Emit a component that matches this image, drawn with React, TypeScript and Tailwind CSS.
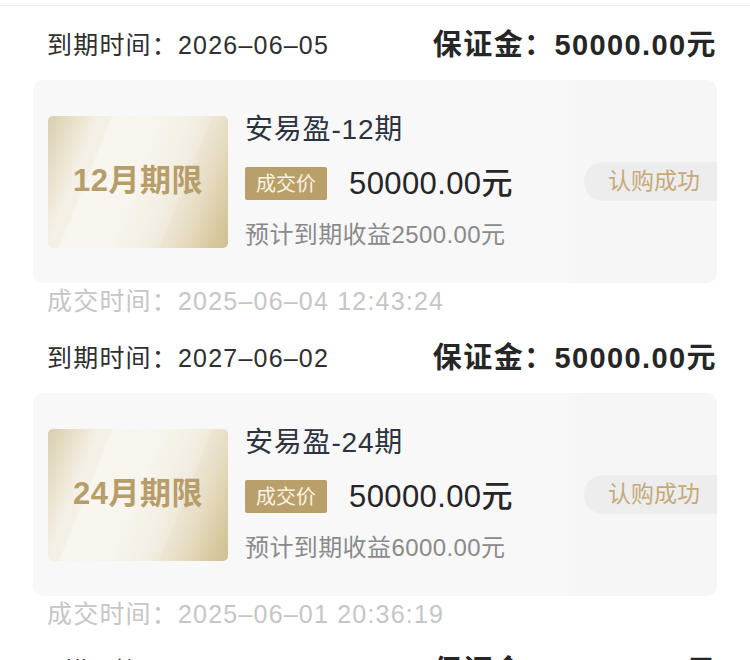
import type { ReactNode } from "react";

type Order = {
  expire: string;
  deposit: string;
  months: number;
  name: string;
  price: string;
  income: string;
  dealTime: string;
};

const orders: Order[] = [
  {
    expire: "2026–06–05",
    deposit: "50000.00元",
    months: 12,
    name: "安易盈-12期",
    price: "50000.00元",
    income: "预计到期收益2500.00元",
    dealTime: "2025–06–04 12:43:24",
  },
  {
    expire: "2027–06–02",
    deposit: "50000.00元",
    months: 24,
    name: "安易盈-24期",
    price: "50000.00元",
    income: "预计到期收益6000.00元",
    dealTime: "2025–06–01 20:36:19",
  },
  {
    expire: "2027–06–01",
    deposit: "50000.00元",
    months: 24,
    name: "安易盈-24期",
    price: "50000.00元",
    income: "预计到期收益6000.00元",
    dealTime: "2025–05–30 10:12:08",
  },
];

function TermCover({ children }: { children: ReactNode }) {
  return (
    <div className="relative flex h-[132px] w-[180px] shrink-0 items-center justify-center overflow-hidden rounded-[5px] bg-[linear-gradient(112deg,#d8cdae_0%,#ebe4d0_14%,#f4f0e5_22%,#f6f2e8_48%,#f0eadc_66%,#e6dcc2_80%,#d8c9a0_92%,#cfbe90_100%)]">
      {/* light sheen band */}
      <div className="absolute inset-0 bg-[linear-gradient(112deg,transparent_0%,transparent_27%,rgba(255,255,255,0.35)_28%,rgba(255,255,255,0.15)_70%,transparent_71%)]" />
      <span className="relative text-[31px] font-bold tracking-[0.5px] text-[#b69d69]">
        {children}
      </span>
    </div>
  );
}

function OrderItem({ order }: { order: Order }) {
  return (
    <section className="pb-[14px]">
      <div className="flex h-[48px] items-center justify-between pl-[47px] pr-[33px]">
        <p className="text-[25px] tracking-[1.2px] text-[#2f2f2f]">
          到期时间：{order.expire}
        </p>
        <p className="text-[29px] font-bold tracking-[1.4px] text-[#262626]">
          保证金：{order.deposit}
        </p>
      </div>

      <div className="mx-[33px] mt-[10px] flex h-[203px] items-center overflow-hidden rounded-[10px] bg-[linear-gradient(90deg,#f8f8f9_0%,#f8f8f9_78%,#f6f6f6_80%,#f6f6f6_100%)] pl-[15px]">
        <TermCover>{order.months}月期限</TermCover>

        <div className="ml-[17px] flex flex-col">
          <p className="text-[28px] leading-[36px] tracking-[0.8px] text-[#2b3240]">
            {order.name}
          </p>
          <div className="mt-[19px] flex h-[33px] items-center">
            <span className="flex h-[33px] items-center rounded-[2px] bg-[#b9a06b] px-[11px] text-[20px] leading-none text-[#fbf3e2]">
              成交价
            </span>
            <span className="ml-[22px] text-[31px] font-medium leading-[33px] tracking-[0.4px] text-[#262626]">
              {order.price}
            </span>
          </div>
          <p className="mt-[19px] text-[24px] leading-[32px] tracking-[0.4px] text-[#8a8a8a]">
            {order.income}
          </p>
        </div>

        <div className="ml-auto flex h-[39px] items-center rounded-l-full bg-[#ededed] pl-[24px] pr-[17px] text-[23px] text-[#c4aa78]">
          认购成功
        </div>
      </div>

      <p className="flex h-[38px] items-center pl-[47px] text-[25px] tracking-[1.2px] text-[#c6c6c6]">
        成交时间：{order.dealTime}
      </p>
    </section>
  );
}

export default function App() {
  return (
    <div className="min-h-screen w-[750px] bg-white font-['Liberation_Sans','Noto_Sans_CJK_SC',sans-serif]">
      <div className="h-[6px] border-b border-[#ebebeb]" />
      <div className="pt-[16px]">
        {orders.map((order, i) => (
          <OrderItem key={i} order={order} />
        ))}
      </div>
    </div>
  );
}
